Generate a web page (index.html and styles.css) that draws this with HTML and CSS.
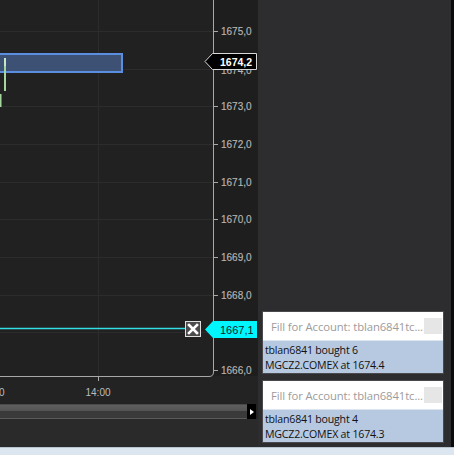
FILE: index.html
```html
<!DOCTYPE html>
<html>
<head>
<meta charset="utf-8">
<link rel="stylesheet" href="styles.css">
</head>
<body>
<div class="app">
  <div class="main">
    <div class="chart-col">
      <svg class="chart" width="258" height="398" viewBox="0 0 258 398">
        <rect x="0" y="0" width="213" height="376" fill="#212121"/>
        <rect x="213" y="0" width="45" height="376" fill="#1e1e1e"/>
        <rect x="0" y="376" width="258" height="22" fill="#232323"/>
        <g stroke="#2c2c2c" stroke-width="1">
          <line x1="0" y1="31.5" x2="213" y2="31.5"/>
          <line x1="0" y1="69.5" x2="213" y2="69.5"/>
          <line x1="0" y1="106.5" x2="213" y2="106.5"/>
          <line x1="0" y1="144.5" x2="213" y2="144.5"/>
          <line x1="0" y1="182.5" x2="213" y2="182.5"/>
          <line x1="0" y1="219.5" x2="213" y2="219.5"/>
          <line x1="0" y1="257.5" x2="213" y2="257.5"/>
          <line x1="0" y1="295.5" x2="213" y2="295.5"/>
          <line x1="0" y1="332.5" x2="213" y2="332.5"/>
          <line x1="98.5" y1="0" x2="98.5" y2="376"/>
        </g>
        <rect x="-2" y="54" width="124" height="18" fill="#3d5174" stroke="#5b8de0" stroke-width="2"/>
        <line x1="5" y1="58" x2="5" y2="91" stroke="#a4d69e" stroke-width="2"/>
        <line x1="5" y1="58" x2="5" y2="66" stroke="#c8e8c4" stroke-width="2"/>
        <line x1="0.5" y1="94" x2="0.5" y2="107" stroke="#a4d69e" stroke-width="2"/>
        <path d="M213.5 0 V372 Q213.5 376.5 209 376.5 H0" fill="none" stroke="#a8a8a8" stroke-width="1"/>
        <line x1="98.5" y1="376" x2="98.5" y2="381" stroke="#a8a8a8"/>
        <g stroke="#a8a8a8" stroke-width="1">
          <line x1="213" y1="31.5" x2="218" y2="31.5"/>
          <line x1="213" y1="106.5" x2="218" y2="106.5"/>
          <line x1="213" y1="144.5" x2="218" y2="144.5"/>
          <line x1="213" y1="182.5" x2="218" y2="182.5"/>
          <line x1="213" y1="219.5" x2="218" y2="219.5"/>
          <line x1="213" y1="257.5" x2="218" y2="257.5"/>
          <line x1="213" y1="295.5" x2="218" y2="295.5"/>
          <line x1="213" y1="370.5" x2="218" y2="370.5"/>
        </g>
        <g class="plabel">
          <text x="221" y="35">1675,0</text>
          <text x="221" y="74">1674,0</text>
          <text x="221" y="110">1673,0</text>
          <text x="221" y="148">1672,0</text>
          <text x="221" y="186">1671,0</text>
          <text x="221" y="223">1670,0</text>
          <text x="221" y="261">1669,0</text>
          <text x="221" y="299">1668,0</text>
          <text x="221" y="374">1666,0</text>
        </g>
        <polygon points="205,61.5 212.5,53.5 256.5,53.5 256.5,69.5 212.5,69.5" fill="#000" stroke="#d8d8d8" stroke-width="1"/>
        <text class="tag-dark" x="220" y="65.5">1674,2</text>
        <line x1="0" y1="328.5" x2="186" y2="328.5" stroke="#35dde6" stroke-width="1.5"/>
        <rect x="185.5" y="321.5" width="15" height="15" fill="#4c4c4c" stroke="#e0e0e0" stroke-width="1"/>
        <path d="M189 325 L197 333 M197 325 L189 333" stroke="#fff" stroke-width="2.6" stroke-linecap="square"/>
        <polygon points="205,329.5 213,321 257,321 257,338 213,338" fill="#00f6ff"/>
        <text class="tag-cyan" x="220" y="333.5">1667,1</text>
        <text class="tlabel" x="-8" y="396" text-anchor="middle">13:00</text>
        <text class="tlabel" x="98" y="396" text-anchor="middle">14:00</text>
      </svg>
      <div class="scroll-area">
        <div class="scrollbar">
          <div class="track"><div class="thumb"></div></div>
          <div class="sbtn"><span class="tri"></span></div>
        </div>
      </div>
    </div>
    <div class="panel">
      <div class="note">
        <div class="note-head"><span class="note-title">Fill for Account: tblan6841tc...</span><span class="note-close"></span></div>
        <div class="note-body">tblan6841 bought 6<br>MGCZ2.COMEX at 1674.4</div>
      </div>
      <div class="note">
        <div class="note-head"><span class="note-title">Fill for Account: tblan6841tc...</span><span class="note-close"></span></div>
        <div class="note-body">tblan6841 bought 4<br>MGCZ2.COMEX at 1674.3</div>
      </div>
    </div>
    <div class="edge"></div>
  </div>
  <div class="statusbar"></div>
</div>
</body>
</html>
```
FILE: styles.css
```css
html, body {
  margin: 0;
  padding: 0;
  background: #2b2b2b;
  overflow: hidden;
}
.app {
  width: 454px;
  height: 455px;
  display: flex;
  flex-direction: column;
}
.main {
  display: flex;
  height: 447px;
}
.chart-col {
  width: 258px;
  display: flex;
  flex-direction: column;
  background: #2a2a2a;
}
.chart {
  display: block;
  font-family: "Liberation Sans", Arial, sans-serif;
}
.plabel text {
  font-size: 10px;
  fill: #b6b6b6;
  stroke: #b6b6b6;
  stroke-width: 0.15px;
}
.tag-dark {
  font-size: 10.5px;
  font-weight: bold;
  fill: #ffffff;
}
.tag-cyan {
  font-size: 11px;
  fill: #10202a;
}
.tlabel {
  font-size: 10px;
  fill: #bcbcbc;
}
.scroll-area {
  flex: 1;
  background: #232323;
  padding-top: 6px;
  display: flex;
  flex-direction: column;
}
.scroll-area::after {
  content: "";
  flex: 1;
  background: #2a2a2a;
}
.scrollbar {
  display: flex;
  height: 15px;
  width: 256px;
}
.track {
  flex: 1;
  background: #3a3a3a;
  border-top: 1px solid #4a4a4a;
  border-bottom: 1px solid #5a5a5a;
  display: flex;
  flex-direction: column;
}
.thumb {
  height: 6px;
  background: linear-gradient(#5e5e5e, #545454);
}
.sbtn {
  width: 9px;
  background: #000;
  display: flex;
  align-items: center;
  justify-content: center;
}
.tri {
  width: 0;
  height: 0;
  border-left: 4px solid #fff;
  border-top: 3px solid transparent;
  border-bottom: 3px solid transparent;
}
.panel {
  width: 193px;
  background: #2d2d2f;
  display: flex;
  flex-direction: column;
  justify-content: flex-end;
  align-items: flex-start;
  gap: 8px;
  padding-bottom: 5px;
  box-sizing: border-box;
}
.note {
  width: 180px;
  margin-left: 5px;
  font-family: "Open Sans", "Noto Sans", sans-serif;
  outline: 1px solid #4a4a4e;
}
.note-head {
  height: 28px;
  background: #ffffff;
  display: flex;
  align-items: center;
  justify-content: space-between;
  padding: 0 1px 0 8px;
}
.note-title {
  font-size: 11.3px;
  color: #9c9c9c;
  letter-spacing: -0.1px;
}
.note-close {
  width: 18px;
  height: 16px;
  background: #e6e6e6;
}
.note-body {
  height: 33px;
  background: #b6c9e1;
  color: #111;
  font-size: 10.6px;
  line-height: 15px;
  padding: 2px 0 0 2px;
  box-sizing: border-box;
  border-top: 1px solid #dde6f0;
  letter-spacing: -0.2px;
}
.edge {
  width: 3px;
  background: #0b0b0b;
}
.statusbar {
  height: 8px;
  background: #dce6f0;
  border-top: 1px solid #b8c4d0;
  box-sizing: border-box;
}
```
